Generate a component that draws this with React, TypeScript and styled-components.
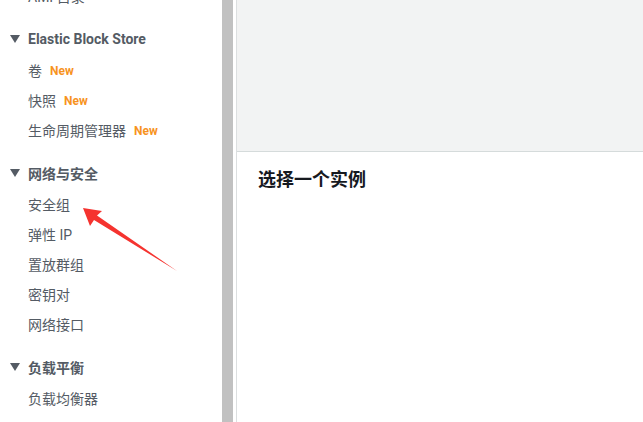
import React from "react";
import styled, { createGlobalStyle } from "styled-components";

const Global = createGlobalStyle`
  html, body { margin: 0; padding: 0; background: #fff; overflow: hidden; }
  body { font-family: Roboto, "Noto Sans CJK SC", sans-serif; }
`;

const Page = styled.div`
  position: relative;
  display: flex;
  width: 643px;
  height: 422px;
  overflow: hidden;
`;

const Sidebar = styled.nav`
  width: 222px;
  flex: none;
  background: #fff;
  overflow: hidden;
`;

const List = styled.div`
  margin-top: -19px;
  display: flex;
  flex-direction: column;
  gap: 11px;
`;

const Section = styled.div`
  display: flex;
  flex-direction: column;
`;

const Header = styled.div`
  height: 33px;
  display: flex;
  align-items: center;
  gap: 8px;
  padding-left: 10px;
  font-size: 14px;
  font-weight: 700;
  color: #545b64;
`;

const Caret = styled.span`
  width: 0;
  height: 0;
  border-left: 5px solid transparent;
  border-right: 5px solid transparent;
  border-top: 8px solid #545b64;
`;

const Item = styled.div`
  height: 30px;
  display: flex;
  align-items: center;
  gap: 8px;
  padding-left: 28px;
  font-size: 14px;
  color: #545b64;
`;

const NewTag = styled.span`
  margin-top: 2px;
  font-size: 12px;
  font-weight: 700;
  color: #f7931e;
`;

const Resizer = styled.div`
  width: 11px;
  flex: none;
  background: #c1c1c1;
  margin-right: 3px;
`;

const Main = styled.main`
  flex: 1;
  display: flex;
  flex-direction: column;
  border-left: 1px solid #dcdfe0;
`;

const TopPanel = styled.div`
  height: 151px;
  flex: none;
  background: #f2f3f3;
  border-bottom: 1px solid #d5dbdb;
`;

const Detail = styled.div`
  padding: 16px 21px;
`;

const Title = styled.h2`
  margin: 0;
  font-size: 18px;
  line-height: 24px;
  font-weight: 700;
  color: #16191f;
`;

const Annotation = styled.svg`
  position: absolute;
  left: 0;
  top: 0;
  pointer-events: none;
`;

type Entry = { label: string; isNew?: boolean };
type Group = { title?: string; items: Entry[] };

const groups: Group[] = [
  { items: [{ label: "AMI 目录" }] },
  {
    title: "Elastic Block Store",
    items: [
      { label: "卷", isNew: true },
      { label: "快照", isNew: true },
      { label: "生命周期管理器", isNew: true },
    ],
  },
  {
    title: "网络与安全",
    items: [
      { label: "安全组" },
      { label: "弹性 IP" },
      { label: "置放群组" },
      { label: "密钥对" },
      { label: "网络接口" },
    ],
  },
  { title: "负载平衡", items: [{ label: "负载均衡器" }] },
];

export default function App() {
  return (
    <>
      <Global />
      <Page>
        <Sidebar>
          <List>
            {groups.map((g, i) => (
              <Section key={i}>
                {g.title && (
                  <Header>
                    <Caret />
                    {g.title}
                  </Header>
                )}
                {g.items.map((it) => (
                  <Item key={it.label}>
                    {it.label}
                    {it.isNew && <NewTag>New</NewTag>}
                  </Item>
                ))}
              </Section>
            ))}
          </List>
        </Sidebar>
        <Resizer />
        <Main>
          <TopPanel />
          <Detail>
            <Title>选择一个实例</Title>
          </Detail>
        </Main>
        <Annotation width="643" height="422" viewBox="0 0 643 422">
          <polygon
            points="83,208 102,211 97,215.5 177,271 94,220 90,226"
            fill="#f5332f"
          />
        </Annotation>
      </Page>
    </>
  );
}
